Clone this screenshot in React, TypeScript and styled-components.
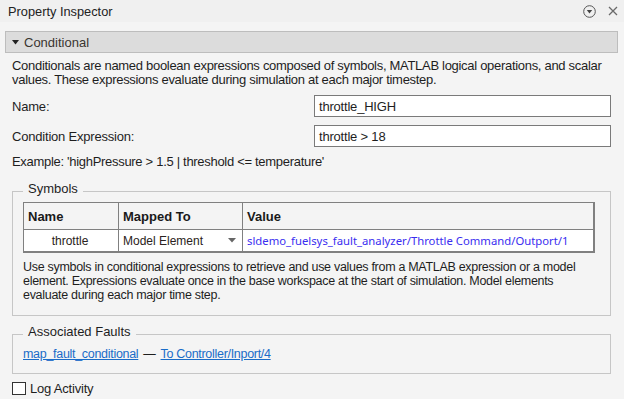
import React from 'react';
import styled, { createGlobalStyle } from 'styled-components';

const GlobalStyle = createGlobalStyle`
  html, body {
    margin: 0;
    padding: 0;
    background: #f4f4f4;
  }
  body {
    font-family: 'Liberation Sans', Arial, sans-serif;
    color: #1e1e1e;
  }
`;

const Window = styled.div`
  width: 624px;
  height: 399px;
  overflow: hidden;
  background: #f4f4f4;
  display: flex;
  flex-direction: column;
`;

const TitleBar = styled.div`
  height: 22px;
  flex-shrink: 0;
  background: #f0f0f0;
  display: flex;
  align-items: center;
  padding: 0 5px 0 8px;
  font-size: 12.8px;
  color: #222;
`;

const TitleText = styled.span`
  flex: 1;
`;

const TitleIcons = styled.div`
  display: flex;
  align-items: center;
  gap: 10px;
`;

const IconButton = styled.span`
  display: inline-flex;
  align-items: center;
  justify-content: center;
  width: 13px;
  height: 13px;
`;

const Body = styled.div`
  padding: 9px 6px 0 5px;
  display: flex;
  flex-direction: column;
`;

const SectionHeader = styled.div`
  height: 20px;
  border: 1px solid #bdbdbd;
  background: #dcdcdc;
  display: flex;
  align-items: center;
  gap: 5px;
  padding-left: 6px;
  font-size: 13px;
  color: #3a3530;
`;

const SectionContent = styled.div`
  padding: 6px 7px 0 7px;
  display: flex;
  flex-direction: column;
`;

const Paragraph = styled.p`
  margin: 0;
  font-size: 13px;
  line-height: 14px;
  letter-spacing: -0.3px;
  color: #1e1e1e;
`;

const FormRow = styled.div`
  display: flex;
  align-items: center;
  justify-content: space-between;
  margin-top: 8px;
  font-size: 13px;
  letter-spacing: -0.2px;
`;

const TextInput = styled.div`
  box-sizing: border-box;
  width: 297px;
  height: 22px;
  border: 1px solid #7a7a7a;
  background: #fff;
  padding-left: 4px;
  display: flex;
  align-items: center;
  font-size: 13px;
  color: #1e1e1e;
`;

const Example = styled(Paragraph)`
  margin-top: 8px;
`;

const Group = styled.fieldset<{ $top: number; $bottom: number }>`
  margin: ${(p) => p.$top}px 0 0 0;
  padding: 0 15px ${(p) => p.$bottom}px 10px;
  border: 1px solid #c6c6c6;
  min-width: 0;
`;

const Legend = styled.legend`
  padding: 0 5px 6px 5px;
  font-size: 13px;
  line-height: 15px;
  color: #1e1e1e;
`;

const Table = styled.div`
  display: grid;
  grid-template-columns: 95px 124px 1fr;
  border: 1px solid #808080;
  border-right-width: 2px;
  border-bottom-width: 2px;
  font-size: 12px;
`;

const HeadCell = styled.div<{ $last?: boolean }>`
  height: 26px;
  display: flex;
  align-items: center;
  padding-left: 4px;
  font-weight: bold;
  font-size: 13px;
  color: #1a1a1a;
  border-bottom: 1px solid #808080;
  border-right: ${(p) => (p.$last ? 'none' : '1px solid #808080')};
`;

const Cell = styled.div<{ $last?: boolean; $center?: boolean }>`
  height: 21px;
  display: flex;
  align-items: center;
  padding-left: 4px;
  padding-right: 6px;
  justify-content: ${(p) => (p.$center ? 'center' : 'space-between')};
  background: #fff;
  color: #2a2220;
  white-space: nowrap;
  overflow: hidden;
  border-right: ${(p) => (p.$last ? 'none' : '1px solid #808080')};
`;

const ValueLink = styled.span`
  font-family: 'Noto Sans', 'Liberation Sans', sans-serif;
  font-size: 11.3px;
  color: #3a2ef0;
`;

const HelpText = styled(Paragraph)`
  margin-top: 7px;
  font-size: 12.5px;
`;

const LinkRow = styled.div`
  display: flex;
  align-items: center;
  gap: 5px;
  padding-top: 2px;
  font-size: 12.5px;
  line-height: 14px;
  letter-spacing: -0.3px;
`;

const Link = styled.a`
  color: #1a6cc8;
  text-decoration: underline;
  cursor: pointer;
`;

const CheckRow = styled.label`
  display: flex;
  align-items: center;
  gap: 4px;
  margin-top: 7px;
  font-size: 13px;
  letter-spacing: -0.2px;
  color: #1e1e1e;
`;

const CheckBox = styled.span`
  box-sizing: border-box;
  width: 14px;
  height: 13px;
  border: 1px solid #333;
  background: #fff;
`;

const Caret = () => (
  <svg width="7" height="5" viewBox="0 0 7 5">
    <path d="M0 0 L7 0 L3.5 4.5 Z" fill="#222" />
  </svg>
);

const DropArrow = () => (
  <svg width="8" height="5" viewBox="0 0 8 5">
    <path d="M0 0 L8 0 L4 4.5 Z" fill="#666" />
  </svg>
);

const App: React.FC = () => {
  return (
    <Window>
      <GlobalStyle />
      <TitleBar>
        <TitleText>Property Inspector</TitleText>
        <TitleIcons>
          <IconButton>
            <svg width="13" height="13" viewBox="0 0 13 13">
              <circle cx="6.5" cy="6.5" r="5.8" fill="none" stroke="#555" strokeWidth="1" />
              <path d="M3.8 5 L9.2 5 L6.5 8.6 Z" fill="#444" />
            </svg>
          </IconButton>
          <IconButton>
            <svg width="10" height="10" viewBox="0 0 10 10">
              <path d="M1 1 L9 9 M9 1 L1 9" stroke="#6a6a6a" strokeWidth="1.3" />
            </svg>
          </IconButton>
        </TitleIcons>
      </TitleBar>

      <Body>
        <SectionHeader>
          <Caret />
          <span>Conditional</span>
        </SectionHeader>

        <SectionContent>
          <Paragraph>
            Conditionals are named boolean expressions composed of symbols, MATLAB logical operations, and scalar
            values. These expressions evaluate during simulation at each major timestep.
          </Paragraph>

          <FormRow>
            <span>Name:</span>
            <TextInput>throttle_HIGH</TextInput>
          </FormRow>
          <FormRow>
            <span>Condition Expression:</span>
            <TextInput>throttle &gt; 18</TextInput>
          </FormRow>

          <Example>Example: 'highPressure &gt; 1.5 | threshold &lt;= temperature'</Example>

          <Group $top={12} $bottom={13}>
            <Legend>Symbols</Legend>
            <Table>
              <HeadCell>Name</HeadCell>
              <HeadCell>Mapped To</HeadCell>
              <HeadCell $last>Value</HeadCell>
              <Cell $center>throttle</Cell>
              <Cell>
                <span>Model Element</span>
                <DropArrow />
              </Cell>
              <Cell $last>
                <ValueLink>sldemo_fuelsys_fault_analyzer/Throttle Command/Outport/1</ValueLink>
              </Cell>
            </Table>
            <HelpText>
              Use symbols in conditional expressions to retrieve and use values from a MATLAB expression or a model
              element. Expressions evaluate once in the base workspace at the start of simulation. Model elements
              evaluate during each major time step.
            </HelpText>
          </Group>

          <Group $top={8} $bottom={12}>
            <Legend>Associated Faults</Legend>
            <LinkRow>
              <Link>map_fault_conditional</Link>
              <span>—</span>
              <Link>To Controller/Inport/4</Link>
            </LinkRow>
          </Group>

          <CheckRow>
            <CheckBox />
            <span>Log Activity</span>
          </CheckRow>
        </SectionContent>
      </Body>
    </Window>
  );
};

export default App;
